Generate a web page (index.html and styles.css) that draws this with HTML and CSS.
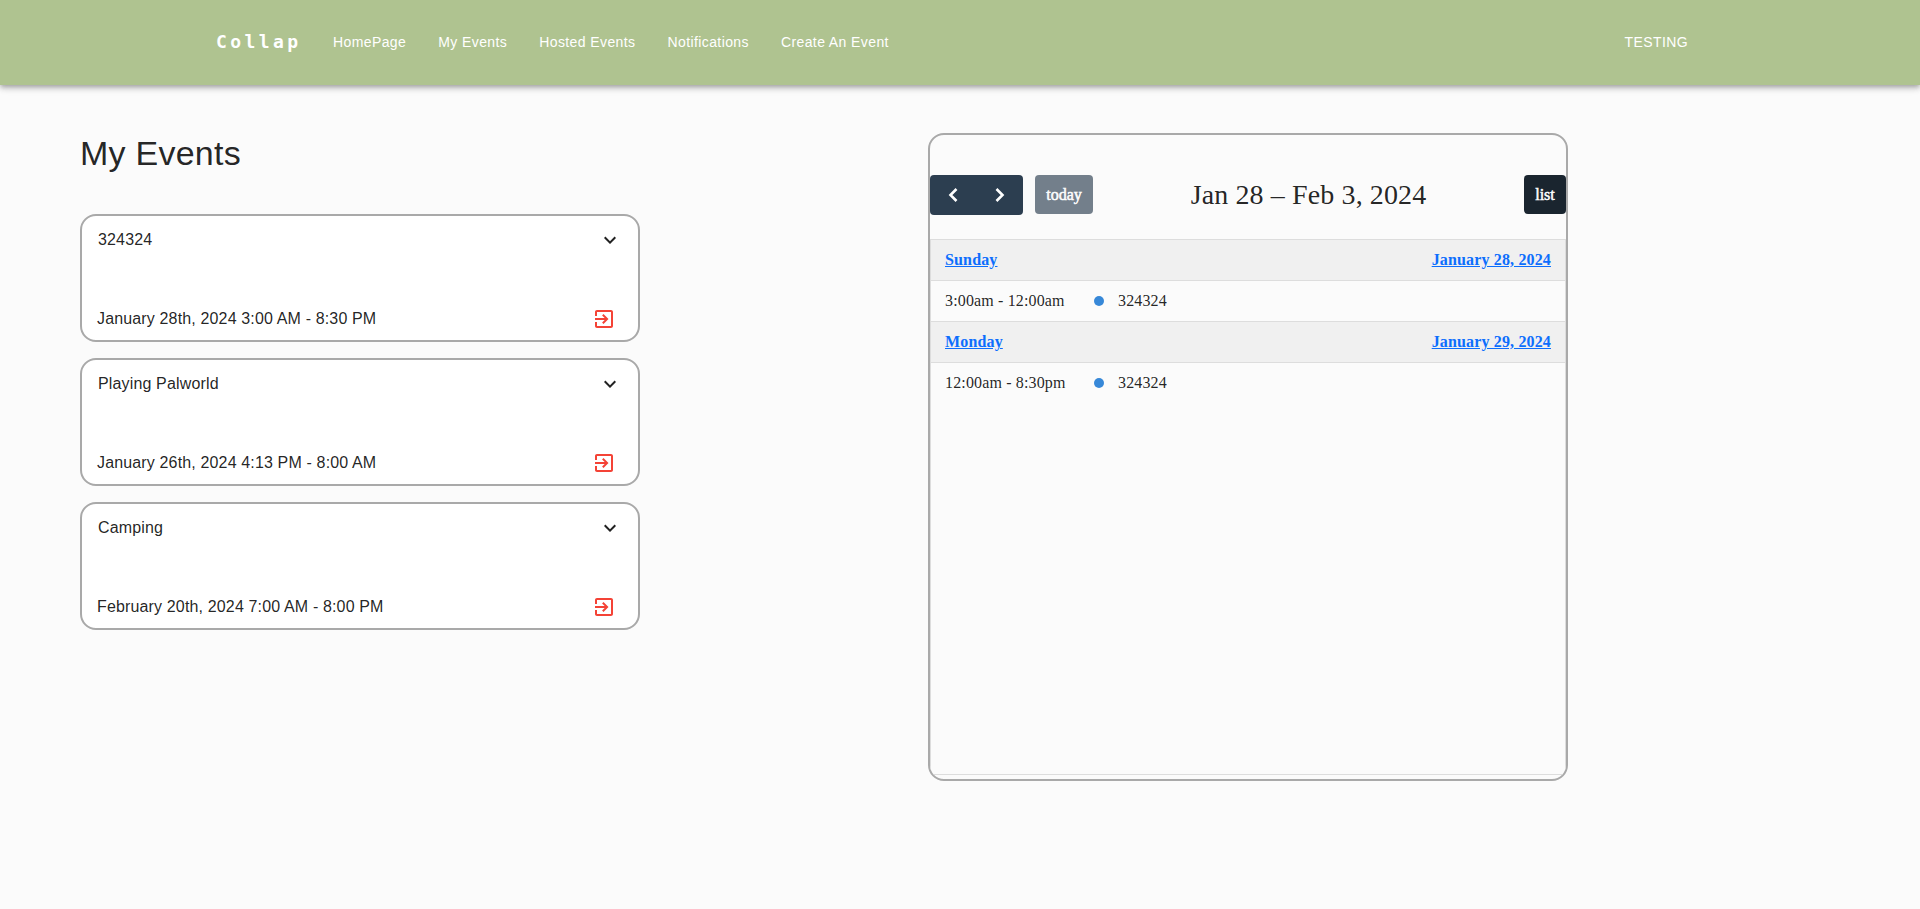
FILE: index.html
```html
<!DOCTYPE html>
<html lang="en">
<head>
<meta charset="utf-8">
<title>Collap - My Events</title>
<link rel="stylesheet" href="styles.css">
</head>
<body>
<svg class="sprite" aria-hidden="true">
  <symbol id="expand" viewBox="0 0 24 24"><path d="M16.59 8.59 12 13.17 7.41 8.59 6 10l6 6 6-6z"/></symbol>
  <symbol id="leave" viewBox="0 0 24 24"><path d="M10.09 15.59 11.5 17l5-5-5-5-1.41 1.41L12.67 11H3v2h9.67l-2.58 2.59zM19 3H5c-1.11 0-2 .9-2 2v4h2V5h14v14H5v-4H3v4c0 1.1.89 2 2 2h14c1.1 0 2-.9 2-2V5c0-1.1-.9-2-2-2z"/></symbol>
</svg>
<header class="navbar">
  <div class="brand">Collap</div>
  <nav class="links">
    <a>HomePage</a><a>My Events</a><a>Hosted Events</a><a>Notifications</a><a>Create An Event</a>
  </nav>
  <a class="account">TESTING</a>
</header>
<main class="page">
  <section class="events">
    <h1 class="heading">My Events</h1>
    <div class="cards">
      <article class="card">
        <div class="card-row"><span class="name">324324</span><svg class="icon expand"><use href="#expand"/></svg></div>
        <div class="card-row"><span>January 28th, 2024 3:00 AM - 8:30 PM</span><svg class="icon leave"><use href="#leave"/></svg></div>
      </article>
      <article class="card">
        <div class="card-row"><span class="name">Playing Palworld</span><svg class="icon expand"><use href="#expand"/></svg></div>
        <div class="card-row"><span>January 26th, 2024 4:13 PM - 8:00 AM</span><svg class="icon leave"><use href="#leave"/></svg></div>
      </article>
      <article class="card">
        <div class="card-row"><span class="name">Camping</span><svg class="icon expand"><use href="#expand"/></svg></div>
        <div class="card-row"><span>February 20th, 2024 7:00 AM - 8:00 PM</span><svg class="icon leave"><use href="#leave"/></svg></div>
      </article>
    </div>
  </section>
  <section class="calendar">
    <div class="toolbar">
      <div class="tools">
        <div class="pager">
          <svg class="chevron" viewBox="0 0 24 24"><path d="M15.5 6 9.5 12l6 6"/></svg>
          <svg class="chevron" viewBox="0 0 24 24"><path d="M8.5 6l6 6-6 6"/></svg>
        </div>
        <div class="button today">today</div>
      </div>
      <h2 class="title">Jan 28 – Feb 3, 2024</h2>
      <div class="button list">list</div>
    </div>
    <div class="agenda">
      <div class="day"><a>Sunday</a><a>January 28, 2024</a></div>
      <div class="entry"><span class="time">3:00am - 12:00am</span><i class="dot"></i><span>324324</span></div>
      <div class="day next"><a>Monday</a><a>January 29, 2024</a></div>
      <div class="entry"><span class="time">12:00am - 8:30pm</span><i class="dot"></i><span>324324</span></div>
    </div>
  </section>
</main>
</body>
</html>
```
FILE: styles.css
```css
* { box-sizing: border-box; }
body {
  margin: 0;
  min-height: 909px;
  background: #fbfbfb;
  color: rgba(0, 0, 0, 0.87);
  font: 400 16px/24px "Liberation Sans", Arial, sans-serif;
  letter-spacing: 0.15px;
}
.sprite { display: none; }

.navbar {
  display: flex;
  align-items: center;
  height: 85px;
  padding: 0 232px 2px 216px;
  background: #afc390;
  color: #fff;
  font-size: 14px;
  letter-spacing: 0.4px;
  box-shadow: 0 2px 4px -1px rgba(0,0,0,.2), 0 4px 5px 0 rgba(0,0,0,.14), 0 1px 10px 0 rgba(0,0,0,.12);
}
.brand {
  width: 117px;
  font: 700 18px/24px "DejaVu Sans Mono", monospace;
  letter-spacing: 3.4px;
}
.links { display: flex; gap: 32px; }
.account { margin-left: auto; }

.page {
  display: grid;
  grid-template-columns: 560px 640px;
  column-gap: 288px;
  align-items: start;
  padding: 48px 80px 0;
}
.heading {
  margin: 0 0 41px;
  font-size: 34px;
  font-weight: 400;
  line-height: 40px;
  letter-spacing: 0.25px;
}
.cards { display: grid; gap: 16px; }
.card {
  display: flex;
  flex-direction: column;
  justify-content: space-between;
  height: 128px;
  padding: 12px 22px 9px 15px;
  border: 2px solid #a9a9a9;
  border-radius: 16px;
  background: #fff;
}
.card-row { display: flex; justify-content: space-between; align-items: center; }
.name { padding-left: 1px; }
.icon { width: 24px; height: 24px; }
.expand { margin-right: -6px; fill: rgba(0,0,0,.87); }
.leave { fill: #f44336; }

.calendar {
  display: flex;
  flex-direction: column;
  height: 648px;
  padding: 40px 0 4px;
  border: 2px solid #a9a9a9;
  border-radius: 16px;
  font-family: "Liberation Serif", "Times New Roman", serif;
  overflow: hidden;
}
.toolbar {
  display: flex;
  justify-content: space-between;
  align-items: center;
  height: 40px;
  margin-bottom: 24px;
}
.tools { display: flex; gap: 12px; }
.pager {
  display: flex;
  align-items: center;
  gap: 23px;
  width: 93px;
  height: 40px;
  padding: 0 11px;
  border-radius: 4px;
  background: #2c3e50;
}
.chevron { width: 24px; height: 24px; fill: none; stroke: #fff; stroke-width: 2.6; }
.button {
  height: 39px;
  border-radius: 4px;
  color: #fff;
  text-align: center;
  line-height: 39px;
  letter-spacing: 0;
  -webkit-text-stroke: 0.5px #fff;
}
.today { width: 58px; background: #2c3e50; opacity: .65; }
.list { width: 42px; margin-bottom: 1px; background: #1a252f; }
.title { margin: 0; font-size: 28px; font-weight: 400; line-height: 34px; letter-spacing: 0.12px; }
.agenda { flex: 1; border: 1px solid #ddd; }
.day {
  display: flex;
  justify-content: space-between;
  height: 41px;
  padding: 8px 14px;
  border-bottom: 1px solid #ddd;
  background: #f0f0f0;
  color: #0d6efd;
  font-weight: 700;
  text-decoration: underline;
}
.next { height: 42px; border-top: 1px solid #ddd; }
.entry { display: flex; align-items: center; height: 40px; padding: 0 14px; }
.time { width: 149px; }
.dot { width: 10px; height: 10px; margin-right: 14px; border-radius: 50%; background: #3788d8; }
```
